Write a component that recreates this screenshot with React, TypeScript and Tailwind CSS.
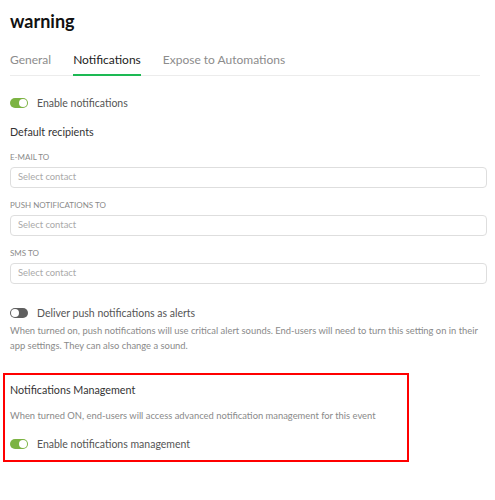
import React from "react";

function Toggle({ on }: { on: boolean }) {
  return (
    <span
      className={`relative inline-block w-[18px] h-[10px] rounded-full ${
        on ? "bg-[#7cb342]" : "bg-[#5f5f5f]"
      }`}
    >
      <span
        className={`absolute top-[1px] w-[8px] h-[8px] rounded-full bg-white ${
          on ? "right-[1px]" : "left-[1px]"
        }`}
      />
    </span>
  );
}

function ContactField({ label }: { label: string }) {
  return (
    <div className="flex flex-col">
      <span className="text-[8px] leading-[10px] text-[#8a8a8a] uppercase mb-[5px]">{label}</span>
      <div className="h-[21px] border border-[#dedede] rounded-[4px] flex items-center px-[7px] text-[9.4px] text-[#a9a9a9]">
        Select contact
      </div>
    </div>
  );
}

export default function App() {
  return (
    <div className="w-[495px] h-[500px] bg-white pl-[10px] pr-[8px] pt-[10px] font-['Lato',sans-serif] text-[#333]">
      <h1 className="text-[18px] font-bold text-[#111] leading-[22px]">warning</h1>

      {/* Tabs */}
      <div className="mt-[20px] mr-[7px] flex gap-[22px] border-b border-[#ececec] text-[12px] leading-[16px]">
        <span className="pb-[6px] text-[#8c8c8c]">General</span>
        <span className="pb-[6px] text-[#222] border-b-2 border-[#1db954] -mb-px">Notifications</span>
        <span className="pb-[6px] text-[#8c8c8c]">Expose to Automations</span>
      </div>

      <label className="mt-[20px] flex items-center gap-[9px] text-[10.5px] leading-[14px] text-[#555]">
        <Toggle on />
        Enable notifications
      </label>

      <h2 className="mt-[15px] text-[10.75px] leading-[14px] text-[#333]">Default recipients</h2>

      <div className="mt-[13px] flex flex-col gap-[12px]">
        <ContactField label="E-mail to" />
        <ContactField label="Push notifications to" />
        <ContactField label="SMS to" />
      </div>

      <label className="mt-[22px] flex items-center gap-[9px] text-[10.5px] leading-[14px] text-[#555]">
        <Toggle on={false} />
        Deliver push notifications as alerts
      </label>
      <p className="mt-[3px] text-[9.4px] leading-[15px] text-[#8a8a8a]">
        When turned on, push notifications will use critical alert sounds. End-users will need to turn this setting on in their
        app settings. They can also change a sound.
      </p>

      <div className="mt-[20px] -ml-[7px] w-[406px] border-2 border-[#ff0000] pl-[5px] pt-[8px] pb-[9px]">
        <h3 className="text-[10.75px] leading-[14px] text-[#333]">Notifications Management</h3>
        <p className="mt-[13px] text-[9.4px] leading-[12px] text-[#8a8a8a]">
          When turned ON, end-users will access advanced notification management for this event
        </p>
        <label className="mt-[15px] flex items-center gap-[9px] text-[10.5px] leading-[14px] text-[#555]">
          <Toggle on />
          Enable notifications management
        </label>
      </div>
    </div>
  );
}
